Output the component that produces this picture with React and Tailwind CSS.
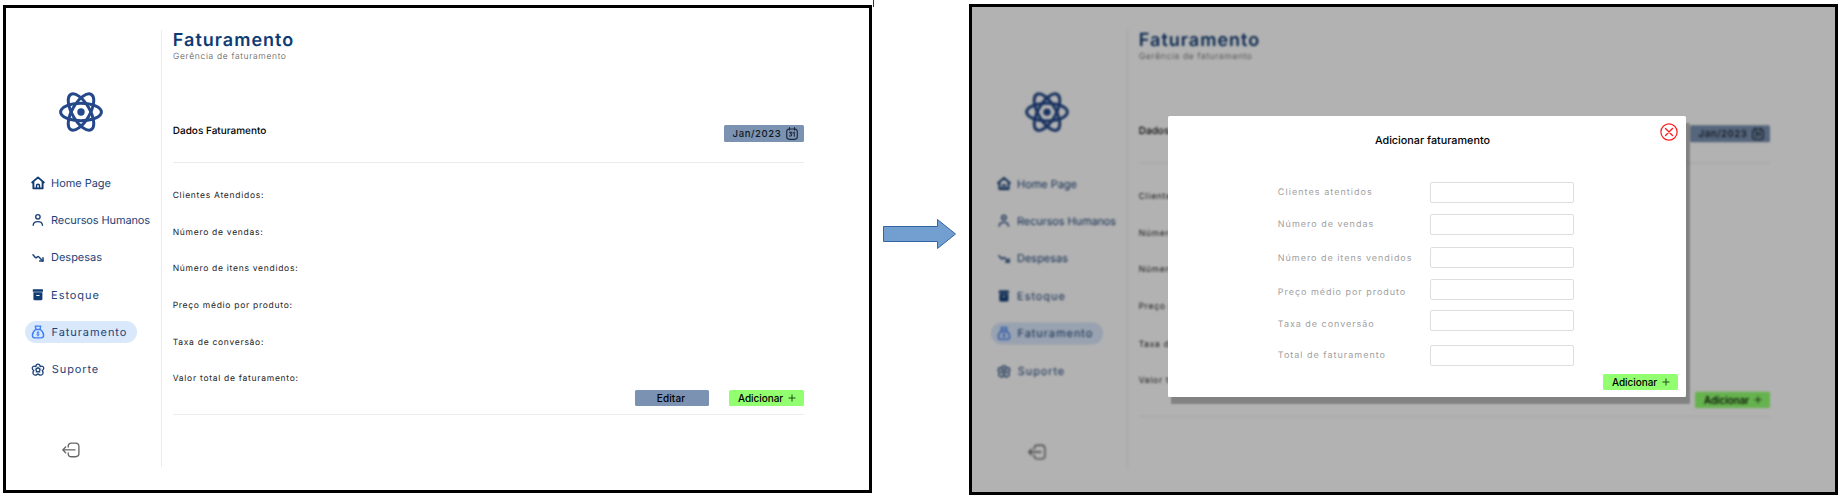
import React from "react";

function Logo() {
  return (
    <svg viewBox="-23 -21 46 42" className="h-[42px] w-[46px]" fill="none" stroke="#24488a" strokeWidth="3">
      <ellipse rx="20.4" ry="8.8" />
      <ellipse rx="20.4" ry="8.8" transform="rotate(60)" />
      <ellipse rx="20.4" ry="8.8" transform="rotate(120)" />
      <circle r="3.7" fill="#24488a" stroke="none" />
    </svg>
  );
}

const iconClass = "h-[14px] w-[14px] shrink-0";

function HomeIcon() {
  return (
    <svg viewBox="0 0 14 14" className={iconClass} fill="none" stroke="#0f3b73" strokeWidth="1.9" strokeLinejoin="round" strokeLinecap="round">
      <path d="M1.2 6.4 L7 1.4 L12.8 6.4 M2.4 5.8 V12.4 H11.6 V5.8" />
      <path d="M5.5 12.4 V9.8 a1.5 1.5 0 0 1 3 0 V12.4" strokeWidth="1.5" />
    </svg>
  );
}
function UserIcon() {
  return (
    <svg viewBox="0 0 14 14" className={iconClass} fill="none" stroke="#1d4378" strokeWidth="1.4" strokeLinecap="round">
      <circle cx="6.9" cy="3.8" r="2.2" />
      <path d="M2.2 12.3 C2.4 7.4 11.2 7.4 11.5 12.3" />
    </svg>
  );
}
function TrendIcon() {
  return (
    <svg viewBox="0 0 14 14" className={iconClass} fill="none" stroke="#1d4378" strokeWidth="1.5" strokeLinecap="round" strokeLinejoin="round">
      <path d="M2 3.8 L4.3 6.4 Q5 7.1 5.8 6.4 L6.5 5.8 Q7.2 5.2 7.9 6 L11.8 10" />
      <path d="M12 6.7 V10.1 H8.6" />
    </svg>
  );
}
function BoxIcon() {
  return (
    <svg viewBox="0 0 14 14" className={iconClass} fill="#0f3b73">
      <rect x="1.8" y="1.3" width="10.2" height="2.5" rx=".4" />
      <path d="M2.4 4.3 H11.4 V11 Q11.4 12.3 10.1 12.3 H3.7 Q2.4 12.3 2.4 11 Z" />
      <rect x="5.2" y="7" width="3.4" height="1.1" rx=".5" fill="#fff" />
    </svg>
  );
}
function BagIcon() {
  return (
    <svg viewBox="0 0 14 14" className={iconClass} fill="none" stroke="#3f7ff5" strokeWidth="1.4" strokeLinejoin="round" strokeLinecap="round">
      <path d="M5 4.4 L4.3 1.1 H9.7 L9 4.4" />
      <path d="M4.7 4.5 H9.3 C11.4 6 12.6 8.2 12.6 10.3 Q12.6 12.9 10 12.9 H4 Q1.4 12.9 1.4 10.3 C1.4 8.2 2.6 6 4.7 4.5 Z" />
      <path d="M8.1 7.6 C7.3 6.9 5.9 7.2 5.9 8 C5.9 9 8.1 8.6 8.1 9.7 C8.1 10.6 6.5 10.7 5.8 9.9 M7 6.5 V11.1" strokeWidth=".9" />
    </svg>
  );
}
function SupportIcon() {
  return (
    <svg viewBox="-7 -7 14 14" className={iconClass} fill="none" stroke="#1d4378" strokeWidth="1.3" strokeLinejoin="round">
      <path d="M-2.1 -3.4 C-2.1 -6.6 2.1 -6.6 2.1 -3.4 C5.6 -5 7 -1.3 4.2 .5 C6.4 3.6 3.6 6.4 .7 4.4 L0 3.8 L-.7 4.4 C-3.6 6.4 -6.4 3.6 -4.2 .5 C-7 -1.3 -5.6 -5 -2.1 -3.4 Z" />
      <circle r="1.9" cy="-.1" />
      <path d="M0 -2 V-3.6 M1.8 -.6 L3.4 -1.1 M1.1 1.5 L2.1 2.8 M-1.1 1.5 L-2.1 2.8 M-1.8 -.6 L-3.4 -1.1" strokeWidth=".6" />
    </svg>
  );
}
function LogoutIcon() {
  return (
    <svg viewBox="0 0 18 16" className="h-[16px] w-[18px]" fill="none" stroke="#666" strokeWidth="1.35" strokeLinecap="round" strokeLinejoin="round">
      <path d="M6.2 5 V4.4 Q6.2 1.1 9.5 1.1 H13.6 Q16.9 1.1 16.9 4.4 V11.6 Q16.9 14.7 13.6 14.7 H9.5 Q6.2 14.7 6.2 11.4 V10.8" />
      <path d="M13 7.9 H.8 M3.6 5 L.8 7.9 L3.6 10.8" />
    </svg>
  );
}
function CalendarIcon() {
  return (
    <svg viewBox="0 0 12 13" className="h-[13px] w-[12px]" fill="none" stroke="#1d2a3c" strokeWidth="1.15" strokeLinecap="round">
      <path d="M3.4 2 H3 Q.7 2.3 .7 4.6 V9.6 Q.7 12.3 3.3 12.3 H8.7 Q11.3 12.3 11.3 9.6 V4.6 Q11.3 2.3 9 2 H3.4" />
      <path d="M3.5 .6 V3 M8.5 .6 V3" />
      <path d="M3.5 5.2 H5.6 L4.5 6.7 Q5.8 6.9 5.6 8 Q5.2 9.5 3.5 8.9 M7 6.1 L8.3 5.2 V9.2" strokeWidth="1.05" />
    </svg>
  );
}
function PlusIcon() {
  return (
    <svg viewBox="0 0 8 8" className="h-[8px] w-[8px]" stroke="#234a1c" strokeWidth="1">
      <path d="M4 .5 V7.5 M.5 4 H7.5" />
    </svg>
  );
}

const nav = [
  { label: "Home Page", Icon: HomeIcon, text: "tracking-[-0.05px]" },
  { label: "Recursos Humanos", Icon: UserIcon, text: "tracking-[-0.13px]" },
  { label: "Despesas", Icon: TrendIcon, text: "tracking-[-0.03px]" },
  { label: "Estoque", Icon: BoxIcon, text: "tracking-[0.94px]" },
  { label: "Faturamento", Icon: BagIcon, text: "tracking-[0.93px] pl-[0.5px]", active: true },
  { label: "Suporte", Icon: SupportIcon, text: "tracking-[0.9px] pl-[0.7px]" },
];

const fields = [
  "Clientes Atendidos:",
  "Número de vendas:",
  "Número de itens vendidos:",
  "Preço médio por produto:",
  "Taxa de conversão:",
  "Valor total de faturamento:",
];

function AddButton() {
  return (
    <button className="flex h-[16px] w-[75px] items-center justify-between rounded-[1.5px] bg-[#92ff70] pl-[9px] pr-[8px] text-[10px] font-medium leading-none tracking-[-0.06px] text-black">
      Adicionar
      <PlusIcon />
    </button>
  );
}

function Page({ editable }) {
  return (
    <div className="flex h-[482px] w-[863px] font-['Inter',sans-serif]">
      <aside className="flex w-[155px] shrink-0 flex-col pl-[18.5px]">
        <div className="mt-[82.7px] pl-[33.2px]">
          <Logo />
        </div>
        <nav className="mt-[39.5px] flex flex-col gap-[15.3px]">
          {nav.map(({ label, Icon, text, active }) => (
            <a
              key={label}
              className={
                "flex h-[22px] w-[112px] items-center gap-[5.7px] whitespace-nowrap rounded-full pl-[6.9px] text-[11px] leading-none text-[#1d4378] " +
                (active ? "bg-[#dae8fc]" : "")
              }
            >
              <Icon />
              <span className={text}>{label}</span>
            </a>
          ))}
        </nav>
        <div className="mt-[61px] pl-[37.6px]">
          <LogoutIcon />
        </div>
      </aside>
      <div className="mt-[22px] h-[437px] w-px shrink-0 bg-[#ececec]" />
      <main className="flex w-[642px] flex-col pl-[10.5px]">
        <h1 className="mt-[23px] pl-[0.3px] text-[18px] font-semibold leading-[20px] tracking-[1.02px] text-[#0f3b73]">Faturamento</h1>
        <p className="pl-[0.5px] text-[8.5px] leading-[12px] font-light tracking-[0.68px] text-[#555]">Gerência de faturamento</p>
        <div className="mt-[62px] flex h-[17px] items-center justify-between">
          <h2 className="-mt-[5.5px] pl-[0.3px] text-[10px] font-medium leading-none text-black">Dados Faturamento</h2>
          <button className="flex h-[17px] w-[80px] items-center justify-between rounded-[1.5px] bg-[#7b92b2] pl-[8.6px] pr-[6px] text-[9.5px] font-medium leading-none tracking-[0.6px] text-[#111820]">
            Jan/2023
            <CalendarIcon />
          </button>
        </div>
        <div className="mt-[20px] h-px w-full bg-[#ebebeb]" />
        <ul className="mt-[15px] flex flex-col">
          {fields.map((f) => (
            <li key={f} className="flex h-[36.65px] items-center pl-[0.2px] text-[8.5px] leading-none tracking-[0.72px] text-[#1c1c1c]">
              {f}
            </li>
          ))}
        </ul>
        <div className="-mt-[7.4px] flex justify-end gap-[20px]">
          {editable && (
            <button className="h-[16px] w-[74px] rounded-[1.5px] bg-[#7b92b2] pr-[2px] text-center text-[10px] font-medium leading-none tracking-[0.1px] text-black">
              Editar
            </button>
          )}
          <AddButton />
        </div>
        <div className="mt-[7.4px] h-px w-full bg-[#ededed]" />
      </main>
    </div>
  );
}

const inputs = [
  { label: "Clientes atentidos", row: "", shift: "pt-[1.4px] tracking-[1.05px]" },
  { label: "Número de vendas", row: "mt-[11.3px]", shift: "pt-[1px] tracking-[1px]" },
  { label: "Número de itens vendidos", row: "mt-[12.3px]", shift: "pt-[1px] tracking-[0.97px]" },
  { label: "Preço médio por produto", row: "mt-[10.7px]", shift: "pt-[6.4px] tracking-[0.97px]" },
  { label: "Taxa de conversão", row: "mt-[10.3px]", shift: "pt-[6.6px] tracking-[0.97px]" },
  { label: "Total de faturamento", row: "mt-[13.4px]", shift: "pt-[1.2px] tracking-[1px]" },
];

function Modal() {
  return (
    <section className="absolute left-[195.5px] top-[109px] flex h-[280.5px] w-[518px] flex-col rounded-[1.5px] bg-white font-['Inter',sans-serif] shadow-[3.5px_7px_2px_0px_rgba(0,0,0,0.27)]">
      <header className="flex h-[65.7px] shrink-0 items-start justify-end pr-[8px] pt-[7px]">
        <h2 className="mr-[169.5px] pt-[12.5px] text-[10.8px] font-medium leading-none text-black">Adicionar faturamento</h2>
        <svg viewBox="0 0 18 18" className="h-[18px] w-[18px]" fill="none" stroke="#fb1e1e" strokeWidth="1.2" strokeLinecap="round">
          <circle cx="9" cy="9" r="8.1" />
          <path d="M5.5 5.5 L12.5 12.5 M12.5 5.5 L5.5 12.5" strokeWidth="1.4" />
        </svg>
      </header>
      {inputs.map(({ label, row, shift }) => (
        <label key={label} className={"flex h-[21px] shrink-0 items-center pl-[110.3px] " + row}>
          <span className={"w-[152.7px] whitespace-nowrap text-[9px] leading-none text-[#a0a0a0] " + shift}>{label}</span>
          <input className="h-[21px] w-[144px] rounded-[2px] border border-[#dedede] bg-white" />
        </label>
      ))}
      <div className="mt-[8.3px] flex justify-end pr-[7.5px]">
        <AddButton />
      </div>
    </section>
  );
}

export default function App() {
  return (
    <div className="relative flex h-[500px] w-[1844px] items-start overflow-hidden bg-white pl-[3px] [text-rendering:geometricPrecision]">
      <div className="absolute left-[873px] top-0 h-[7px] w-px bg-[#333]" />
      <div className="mt-[5px] h-[488px] w-[869px] shrink-0 border-[3px] border-black bg-white">
        <Page editable />
      </div>
      <div className="flex w-[97px] shrink-0 justify-center pr-[2px] pt-[218px]">
        <svg viewBox="0 0 75 32" className="h-[32px] w-[75px]" fill="#729fcf" stroke="#3465a4" strokeWidth="1">
          <path d="M1.5 8.5 H55.5 V1.5 L73.5 16 L55.5 30.5 V23.5 H1.5 Z" />
        </svg>
      </div>
      <div className="relative mt-[4px] h-[491px] w-[869px] shrink-0 overflow-hidden border-[3px] border-black bg-white">
        <div className="origin-top translate-y-[0.5px] scale-y-[1.006] blur-[1px]">
          <Page />
        </div>
        <div className="absolute inset-0 bg-black/30" />
        <Modal />
      </div>
    </div>
  );
}
